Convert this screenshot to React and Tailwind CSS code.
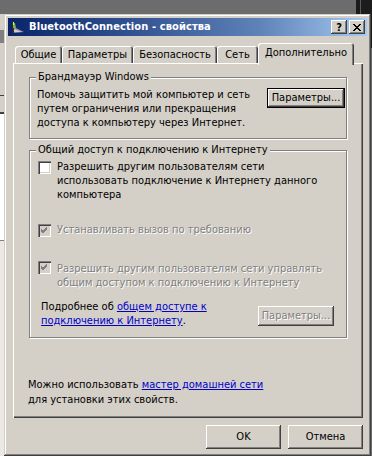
import React from "react";

const F = "font-['DejaVu_Sans_Condensed','DejaVu_Sans',sans-serif]";

const raised =
  "bg-[#d4d0c8] shadow-[inset_-1px_-1px_0_#404040,inset_1px_1px_0_#ffffff,inset_-2px_-2px_0_#808080,inset_2px_2px_0_#d4d0c8]";

function Check({ checked, disabled }) {
  return (
    <div
      className={
        "w-[13px] h-[13px] shrink-0 flex items-center justify-center shadow-[inset_1px_1px_0_#808080,inset_2px_2px_0_#404040,inset_-1px_-1px_0_#ffffff,inset_-2px_-2px_0_#d4d0c8] " +
        (disabled ? "bg-[#d4d0c8]" : "bg-white")
      }
    >
      {checked && (
        <svg width="7" height="7" viewBox="0 0 7 7">
          <path
            d="M0 2 L2 4 L6 0 M0 3 L2 5 L6 1 M0 4 L2 6 L6 2"
            stroke={disabled ? "#808080" : "#000"}
            strokeWidth="1"
            fill="none"
            shapeRendering="crispEdges"
          />
        </svg>
      )}
    </div>
  );
}

function Tab({ label, w, selected }) {
  if (selected) {
    return (
      <div
        className={`${w} h-[22px] relative z-10 -mb-[2px] bg-[#d4d0c8] rounded-t-[3px] shadow-[inset_1px_1px_0_#ffffff,inset_-1px_0_0_#404040,inset_-2px_0_0_#808080] flex items-start justify-center pt-[3px] text-black`}
      >
        {label}
      </div>
    );
  }
  return (
    <div
      className={`${w} h-[17px] bg-[#d4d0c8] rounded-t-[3px] shadow-[inset_1px_1px_0_#ffffff,inset_-1px_0_0_#404040,inset_-2px_0_0_#808080] flex items-start justify-center pt-[2px] text-black`}
    >
      {label}
    </div>
  );
}

const disabledText = "text-[#808080] [text-shadow:1px_1px_0_#ffffff]";

export default function App() {
  return (
    <div
      className={`${F} w-[372px] h-[456px] relative overflow-hidden bg-[#6c6c6c] text-[11px] leading-[14px]`}
    >
      {/* background windows */}
      <div className="absolute right-0 top-0 w-[16px] h-[48px] bg-[#1c1c1c]">
        <div className="ml-[4px] w-[1px] h-full bg-[#5a5a5a]" />
      </div>
      <div className="absolute left-0 top-[14px] w-[4px] h-[442px] bg-[#d4d0c8] flex flex-col">
        <div className="h-[16px]" />
        <div className="h-[13px] bg-[#808080]" />
        <div className="h-[52px]" />
        <div className="h-[1px] bg-[#404040]" />
        <div className="h-[16px]" />
        <div className="h-[2px] bg-[#404040]" />
        <div className="h-[126px] bg-white" />
        <div className="h-[1px] bg-[#808080]" />
        <div className="flex-1 bg-[#ece9e4]" />
      </div>

      {/* dialog window */}
      <div
        className={`absolute left-[4px] top-[14px] w-[367px] h-[442px] bg-[#d4d0c8] p-[4px] flex flex-col shadow-[inset_-1px_-1px_0_#404040,inset_1px_1px_0_#d4d0c8,inset_-2px_-2px_0_#808080,inset_2px_2px_0_#ffffff]`}
      >
        {/* title bar */}
        <div className="h-[18px] shrink-0 bg-linear-to-r from-[#0a246a] via-[#5f82b8] via-70% to-[#a6caf0] flex items-center pl-[2px] pr-[2px]">
          <svg width="16" height="16" viewBox="0 0 16 16" className="shrink-0">
            <path d="M2 2 L4 2 L4 14 L2 14 Z" fill="#2d2d2d" />
            <path d="M4 8 L14 13 L4 14 Z" fill="#8c8c9c" />
            <path d="M4 10 L12 13 L4 13 Z" fill="#d8c8d8" />
            <path d="M3 4 L5 4 L6 9 L3 9 Z" fill="#7ab648" />
            <path d="M3 3 L4 3 L4 6 L3 6 Z" fill="#d8f080" />
          </svg>
          <div className="ml-[3px] text-white font-bold text-[11px] leading-[18px] tracking-[0.1px] whitespace-nowrap">
            BluetoothConnection - свойства
          </div>
          <div className="flex-1" />
          <div className={`${raised} w-[16px] h-[14px] flex items-center justify-center font-bold text-[11px] leading-none text-black`}>
            ?
          </div>
          <div className={`${raised} ml-[2px] w-[16px] h-[14px] flex items-center justify-center`}>
            <svg width="8" height="7" viewBox="0 0 8 7">
              <path
                d="M0 0h2v1H0zM6 0h2v1H6zM1 1h2v1H1zM5 1h2v1H5zM2 2h4v1H2zM3 3h2v1H3zM2 4h4v1H2zM1 5h2v1H1zM5 5h2v1H5zM0 6h2v1H0zM6 6h2v1H6z"
                fill="#000"
              />
            </svg>
          </div>
        </div>

        {/* tabs + panel */}
        <div className="mt-[7px] ml-[5px] w-[350px] flex flex-col">
          <div className="flex items-end pl-[2px] h-[20px]">
            <Tab label="Общие" w="w-[47px]" />
            <Tab label="Параметры" w="w-[71px]" />
            <Tab label="Безопасность" w="w-[84px]" />
            <Tab label="Сеть" w="w-[41px]" />
            <Tab label="Дополнительно" w="w-[96px]" selected />
          </div>
          <div className="h-[355px] bg-[#d4d0c8] shadow-[inset_1px_1px_0_#ffffff,inset_-1px_-1px_0_#404040,inset_-2px_-2px_0_#808080] pt-[14px] pl-[16px] flex flex-col">
            {/* group 1 */}
            <div className="relative w-[318px] h-[62px] border border-[#808080] shadow-[inset_1px_1px_0_#ffffff,1px_1px_0_#ffffff] pt-[10px] pl-[7px] flex items-start">
              <div className="absolute -top-[8px] left-[6px] px-[2px] bg-[#d4d0c8] text-black">
                Брандмауэр Windows
              </div>
              <div className="flex-1 text-black">
                <div>Помочь защитить мой компьютер и сеть</div>
                <div>путем ограничения или прекращения</div>
                <div>доступа к компьютеру через Интернет.</div>
              </div>
              <div className="mr-[1px] w-[78px] h-[20px] border border-black">
                <div className={`${raised} w-full h-full flex items-center justify-center text-black`}>
                  Параметры...
                </div>
              </div>
            </div>

            {/* group 2 */}
            <div className="relative mt-[11px] w-[318px] h-[188px] border border-[#808080] shadow-[inset_1px_1px_0_#ffffff,1px_1px_0_#ffffff] pt-[9px] pl-[8px] flex flex-col">
              <div className="absolute -top-[8px] left-[6px] px-[2px] bg-[#d4d0c8] text-black">
                Общий доступ к подключению к Интернету
              </div>
              <div className="flex items-start gap-[6px]">
                <div className="mt-[1px]">
                  <Check />
                </div>
                <div className="text-black">
                  <div>Разрешить другим пользователям сети</div>
                  <div>использовать подключение к Интернету данного</div>
                  <div>компьютера</div>
                </div>
              </div>
              <div className="mt-[21px] flex items-start gap-[6px]">
                <div className="mt-[1px]">
                  <Check checked disabled />
                </div>
                <div className={disabledText}>Устанавливать вызов по требованию</div>
              </div>
              <div className="mt-[25px] flex items-start gap-[6px]">
                <div className="-mt-[1px]">
                  <Check checked disabled />
                </div>
                <div className={disabledText}>
                  <div>Разрешить другим пользователям сети управлять</div>
                  <div>общим доступом к подключению к Интернету</div>
                </div>
              </div>
              <div className="mt-[10px] pl-[3px] pr-[12px] flex items-start justify-between">
                <div className="text-black">
                  <div>
                    Подробнее об{" "}
                    <span className="text-[#0000cc] underline">общем доступе к</span>
                  </div>
                  <div>
                    <span className="text-[#0000cc] underline">подключению к Интернету</span>.
                  </div>
                </div>
                <div className={`${raised} mt-[6px] w-[76px] h-[20px] flex items-center justify-center ${disabledText}`}>
                  Параметры...
                </div>
              </div>
            </div>

            <div className="mt-[40px] -ml-[1px] text-black">
              <div>
                Можно использовать{" "}
                <span className="text-[#0000cc] underline">мастер домашней сети</span>
              </div>
              <div className="mt-[1px]">для установки этих свойств.</div>
            </div>
          </div>
        </div>

        {/* bottom buttons */}
        <div className="mt-[7px] flex justify-end gap-[7px] pr-[4px]">
          <div className={`${raised} w-[75px] h-[24px] flex items-center justify-center text-black`}>
            OK
          </div>
          <div className={`${raised} w-[75px] h-[24px] flex items-center justify-center text-black`}>
            Отмена
          </div>
        </div>
      </div>
    </div>
  );
}
